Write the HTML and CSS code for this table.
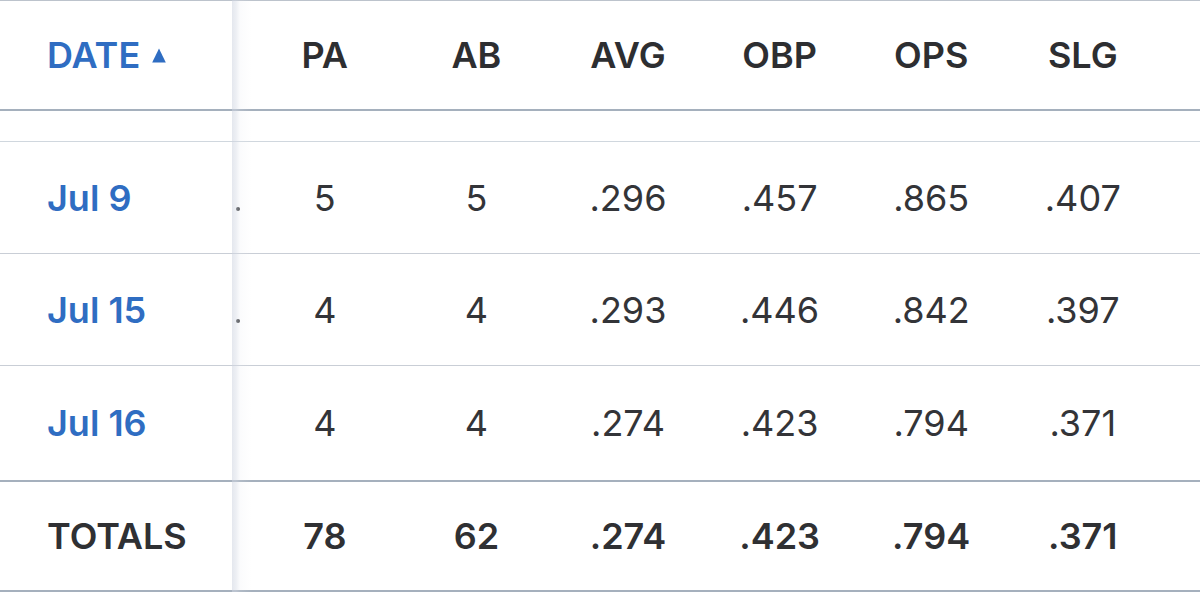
FILE: index.html
```html
<!DOCTYPE html>
<html>
<head>
<meta charset="utf-8">
<link rel="stylesheet" href="styles.css">
</head>
<body>
<div class="table">
  <div class="row head">
    <div class="cell date">DATE <svg class="sort" width="14" height="15" viewBox="0 0 14 15"><path d="M7 0.5 L13.8 14.5 L0.2 14.5 Z" fill="#2f6dc2"/></svg></div>
    <div class="cell spacer"></div>
    <div class="cell">PA</div>
    <div class="cell">AB</div>
    <div class="cell">AVG</div>
    <div class="cell">OBP</div>
    <div class="cell">OPS</div>
    <div class="cell">SLG</div>
    <div class="cell"></div>
  </div>
  <div class="row gap"></div>
  <div class="row body">
    <div class="cell date">Jul 9</div>
    <div class="cell spacer"><span class="dot"></span></div>
    <div class="cell">5</div>
    <div class="cell">5</div>
    <div class="cell">.296</div>
    <div class="cell">.457</div>
    <div class="cell">.865</div>
    <div class="cell">.407</div>
    <div class="cell"></div>
  </div>
  <div class="row body">
    <div class="cell date">Jul 15</div>
    <div class="cell spacer"><span class="dot"></span></div>
    <div class="cell">4</div>
    <div class="cell">4</div>
    <div class="cell">.293</div>
    <div class="cell">.446</div>
    <div class="cell">.842</div>
    <div class="cell">.397</div>
    <div class="cell"></div>
  </div>
  <div class="row body last">
    <div class="cell date">Jul 16</div>
    <div class="cell spacer"></div>
    <div class="cell">4</div>
    <div class="cell">4</div>
    <div class="cell">.274</div>
    <div class="cell">.423</div>
    <div class="cell">.794</div>
    <div class="cell">.371</div>
    <div class="cell"></div>
  </div>
  <div class="row totals">
    <div class="cell date">TOTALS</div>
    <div class="cell spacer"></div>
    <div class="cell">78</div>
    <div class="cell">62</div>
    <div class="cell">.274</div>
    <div class="cell">.423</div>
    <div class="cell">.794</div>
    <div class="cell">.371</div>
    <div class="cell"></div>
  </div>
  <div class="shadow"></div>
</div>
</body>
</html>
```

FILE: styles.css
```css
html, body {
  margin: 0;
  padding: 0;
  background: #ffffff;
}

body {
  font-family: Inter, "Liberation Sans", sans-serif;
  color: #333438;
  width: 1200px;
  height: 593px;
  overflow: hidden;
}

.table {
  position: relative;
  width: 1200px;
}

.row {
  display: grid;
  grid-template-columns: 236px 13px repeat(6, 151.6px) 1fr;
  box-sizing: border-box;
  align-items: center;
  font-size: 36px;
}

.cell {
  text-align: center;
  white-space: nowrap;
}

.cell.date {
  text-align: left;
  padding-left: 47px;
}

.spacer {
  align-self: stretch;
  display: flex;
  align-items: center;
}

.head {
  height: 111px;
  border-top: 1px solid #bcc3cc;
  border-bottom: 2px solid #a5b0bd;
  font-weight: 600;
  color: #2d2e31;
}

.head .date {
  color: #2f6dc2;
  display: flex;
  align-items: center;
  gap: 12px;
}

.sort {
  display: block;
  margin-top: 0;
}

.gap {
  height: 31px;
  border-bottom: 1px solid #d0d7de;
}

.body {
  height: 112px;
  border-bottom: 1px solid #c9ced6;
  font-weight: 400;
}

.body.last {
  height: 116px;
  border-bottom: 2px solid #a5b0bd;
}

.body .date {
  color: #2f6dc2;
  font-weight: 600;
}

.totals {
  height: 110px;
  border-bottom: 2px solid #a5b0bd;
  font-weight: 600;
  color: #2f3033;
}

.dot {
  display: block;
  width: 4px;
  height: 4px;
  border-radius: 50%;
  background: #3a3b3e;
  margin-left: 0;
  margin-top: 22px;
}

.shadow {
  position: absolute;
  top: 0;
  bottom: 0;
  left: 232px;
  width: 20px;
  pointer-events: none;
  background: linear-gradient(to right, rgba(206, 212, 224, 0.55) 0, rgba(214, 219, 230, 0.45) 4px, rgba(230, 233, 240, 0.18) 8px, rgba(255, 255, 255, 0) 20px);
}
```
